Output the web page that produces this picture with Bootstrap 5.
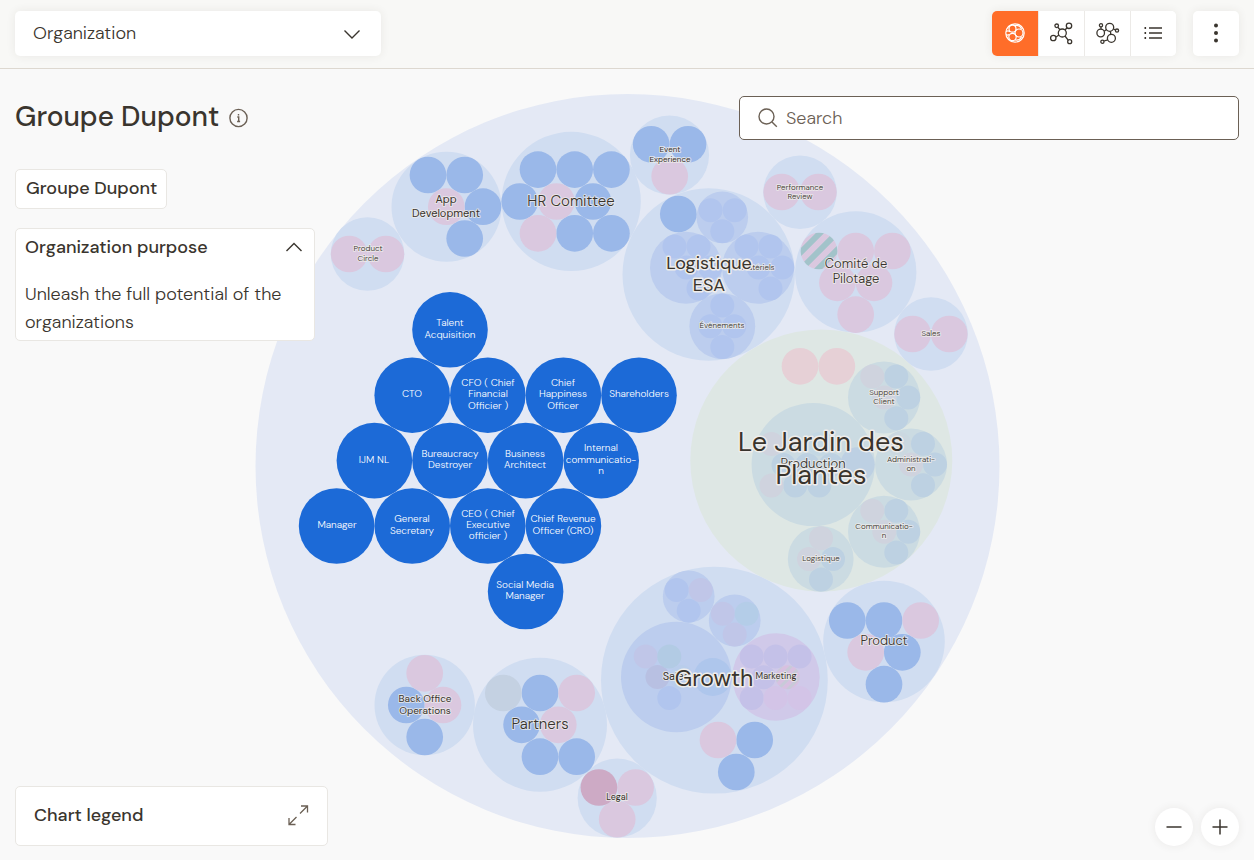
<!DOCTYPE html>
<html lang="en">
<head>
<meta charset="utf-8">
<meta name="viewport" content="width=device-width, initial-scale=1">
<title>Groupe Dupont</title>
<link href="https://cdn.jsdelivr.net/npm/bootstrap@5.3.0/dist/css/bootstrap.min.css" rel="stylesheet">
<style>
:root { --ink:#3a352e; --soft:#6b6055; --line:#e9e7e3; --orange:#ff6d29; }
body { font-family:"DM Sans", Inter, "Open Sans", sans-serif; font-weight:300; font-size:18px; color:var(--ink); background:#f9f9f9; }
svg { display:block; }
.topbar { background:#f8f8f6; border-bottom:1px solid #ddd8d0; padding:11px 15px 12px; }
.raised { background-color:#fff; border-radius:5px; box-shadow:0 0 10px rgba(60,50,40,.08); }
.view-select { width:366px; height:45px; border:0; padding:0 48px 0 18px; font-size:18px; font-weight:300; color:var(--ink);
  background-image:url("data:image/svg+xml,%3Csvg xmlns='http://www.w3.org/2000/svg' viewBox='0 0 16 16'%3E%3Cpath d='M.5 4.5 8 12l7.500-7.500' fill='none' stroke='%233a352e' stroke-width='1.400'/%3E%3C/svg%3E");
  background-position:right 21px center; background-size:16px 16px; }
.tools { gap:17px; }
.tool { width:46px; height:45px; padding:0 0 1px; border:0; border-radius:0; background:#fff; color:var(--ink); display:flex; align-items:center; justify-content:center; }
.tool + .tool { border-left:1px solid #eceae7; }
.tool.raised { border-radius:5px; }
.tool.active, .tool.active:hover { background:var(--orange); color:#fff; }
.stage { min-height:0; }
.chart { position:absolute; inset:0; width:100%; height:100%; }
.overlay { position:relative; pointer-events:none; padding:27px 15px 14px; }
.overlay > * > * { pointer-events:auto; }
.side { width:300px; }
.page-title { font-size:28px; line-height:42px; font-weight:550; margin:0; }
.panel { background:#fff; border:1px solid var(--line); border-radius:5px; color:var(--ink); text-align:left; }
.crumb { font-size:18px; line-height:20px; font-weight:500; padding:8px 9px 10px 10px; margin-top:31px; text-decoration:none; }
.purpose { margin-top:19px; padding:8px 9px 4px; }
.purpose-head { font-size:18px; line-height:20px; font-weight:500; }
.purpose p { font-size:18px; line-height:28px; margin:23px 0 0; }
.search { width:500px; height:44px; border:1px solid var(--soft); border-radius:5px; background:#fff; padding:0 16px 0 18px; color:var(--soft); }
.search input, .search input:focus { border:0; padding:0; background:none; box-shadow:none; font-size:18px; font-weight:300; color:var(--ink); }
.search input::placeholder { color:#6b6055; opacity:1; }
.legend-btn { width:313px; height:60px; padding:0 18px 2px; font-size:18px; font-weight:500; }
.zoom-btn { width:38px; height:38px; padding:0; border:0; border-radius:50%; color:var(--ink); display:flex; align-items:center; justify-content:center; }
.chart text { text-anchor:middle; fill:#39342d; stroke:#efedeb; stroke-opacity:.75; stroke-width:2px; paint-order:stroke; stroke-linejoin:round; }
.t8 { font-size:8px; } .t9 { font-size:9px; } .t10 { font-size:10px; } .t11 { font-size:11px; } .t13 { font-size:13px; } .t15 { font-size:15px; } .t18 { font-size:18px; } .t23 { font-size:23px; } .t27 { font-size:27px; }
.regular, .t18, .t23, .t27 { font-weight:400; }
.chart .roles text { fill:#fff; stroke:none; }
.chart .big text { stroke-width:3px; stroke-opacity:1; }
.root { fill:#e4e9f5; } .c1 { fill:#d0ddf1; } .c2 { fill:#bccdee; } .blue { fill:#9ab8e9; } .pink { fill:#dac8df; } .s-blue { fill:#b1c5ee; }
.solid { fill:#1c6ad7; } .green { fill:#dee7e4; } .g2 { fill:#cbdbe2; } .g-blue { fill:#bdd1e2; } .g-pink { fill:#cfd3de; }
.lilac { fill:#c0c6e8; } .teal { fill:#b4cde8; } .mkt { fill:#d0c9e9; } .m-blue { fill:#c4c1e8; } .m-pink { fill:#d3c4e7; }
</style>
</head>
<body>
<div class="d-flex flex-column min-vh-100">
<header class="topbar d-flex justify-content-between align-items-center">
  <select class="form-select view-select raised" aria-label="View"><option>Organization</option></select>
  <div class="tools d-flex">
    <div class="raised d-flex overflow-hidden" role="group" aria-label="Chart type">
      <button class="btn tool active" type="button" aria-label="Circles"><svg width="20" height="20" viewBox="0 0 20 20" fill="none" stroke="currentColor" stroke-width="1.200"><circle cx="10" cy="10" r="9.200"/><circle cx="7.500" cy="5.700" r="3.500"/><circle cx="14" cy="10" r="4"/><circle cx="7.500" cy="14" r="3.700"/><path d="M1 8.500c1.500-1 3-.6 4 .2M1 11.500c1.200 1 2.400.6 3.300 0M9.500 2.500C12.500 2 15.500 3.500 16.500 6M10 17c3 .5 5.500-.8 6.500-3"/></svg></button>
      <button class="btn tool" type="button" aria-label="Network"><svg width="24" height="24" viewBox="0 0 24 24" fill="none" stroke="currentColor" stroke-width="1.300"><circle cx="12.300" cy="12" r="4"/><circle cx="6.700" cy="4.800" r="1.800"/><circle cx="19" cy="4.800" r="2.700"/><circle cx="3.300" cy="17" r="2.700"/><circle cx="19.700" cy="20.700" r="2"/><path d="m7.800 6.300 2.200 2.500M17.100 6.700 15 9M6 16l3-2M15 15l3.300 4.300"/></svg></button>
      <button class="btn tool" type="button" aria-label="Clusters"><svg width="24" height="24" viewBox="0 0 24 24" fill="none" stroke="currentColor" stroke-width="1.300"><circle cx="5" cy="4.300" r="1.600"/><circle cx="13.700" cy="6.300" r="4"/><circle cx="21" cy="9.600" r="1.600"/><circle cx="4.700" cy="12" r="3.800"/><circle cx="15.400" cy="17.300" r="4"/><circle cx="6.400" cy="20.700" r="1.600"/><path d="M5 6v2.200M17.400 8l2 .9M8.200 10.300l2.300-1.800M14.400 10.300l.4 3M8 20l3.700-1.200"/></svg></button>
      <button class="btn tool" type="button" aria-label="List"><svg width="20" height="20" viewBox="0 0 20 20" fill="none" stroke="currentColor" stroke-width="1.300"><path d="M5 5h13M5 10h13M5 15h13"/><path d="M.5 5h1.600M.5 10h1.600M.5 15h1.600" stroke-width="1.800"/></svg></button>
    </div>
    <button class="btn tool raised" type="button" aria-label="More"><svg width="20" height="20" viewBox="0 0 20 20" fill="currentColor"><circle cx="10" cy="2.500" r="2"/><circle cx="10" cy="10" r="2"/><circle cx="10" cy="17.500" r="2"/></svg></button>
  </div>
</header>

<main class="stage position-relative flex-grow-1 d-flex flex-column">
  <svg class="chart" viewBox="0 69 1254 791" role="img" aria-label="Organization chart">
    <defs>
      <circle id="r" r="18.350"/><circle id="s" r="12"/><circle id="b" r="37.800"/>
      <pattern id="stripes" width="12" height="12" patternUnits="userSpaceOnUse" patternTransform="translate(819 251) rotate(45)"><rect width="12" height="12" fill="#dac8df"/><rect width="3" height="12" fill="#a2c3ca"/><rect x="9" width="3" height="12" fill="#a2c3ca"/></pattern>
      <pattern id="stripes2" width="7" height="7" patternUnits="userSpaceOnUse" patternTransform="rotate(45)"><rect width="7" height="7" fill="#d8c0e0"/><rect width="3" height="7" fill="#c8cad8"/></pattern>
    </defs>
    <circle class="root" cx="627.500" cy="466" r="372"/>
    <g class="c1">
      <circle cx="367.500" cy="254" r="36.800"/><circle cx="446.500" cy="206.800" r="55"/><circle cx="571.200" cy="201.400" r="69.600"/>
      <circle cx="669.500" cy="155" r="39.600"/><circle cx="800" cy="192.300" r="36.800"/><circle cx="708.700" cy="274.500" r="86.200"/>
      <circle cx="855.700" cy="272" r="60.700"/><circle cx="931" cy="334" r="36.800"/><circle cx="714.400" cy="680.200" r="113.400"/>
      <circle cx="884" cy="641.500" r="60.800"/><circle cx="424.700" cy="705" r="50.200"/><circle cx="540" cy="724.700" r="67"/><circle cx="617.200" cy="798" r="39.600"/>
    </g>
    <circle class="green" cx="821.300" cy="460.500" r="131"/>
    <g class="c2">
      <circle cx="722.300" cy="217.300" r="25.800"/><circle cx="686" cy="267.700" r="36"/><circle cx="758" cy="267.700" r="36"/><circle cx="722.300" cy="326.200" r="32.900"/>
      <circle cx="688.700" cy="596.500" r="25.900"/><circle cx="734.700" cy="620.500" r="25.900"/><circle cx="676.300" cy="677" r="55.300"/>
    </g>
    <circle class="mkt" cx="776" cy="677" r="43.700"/>
    <g class="g2">
      <circle cx="813.200" cy="464.500" r="61.600"/><circle cx="884" cy="397.500" r="36"/><circle cx="911" cy="464.500" r="36"/><circle cx="884" cy="531.800" r="36"/><circle cx="820.700" cy="558.900" r="32.900"/>
    </g>
    <g class="blue">
      <use href="#r" x="428" y="175"/><use href="#r" x="464.700" y="175"/><use href="#r" x="483" y="206.700"/><use href="#r" x="464.700" y="238.500"/>
      <use href="#r" x="538" y="169.600"/><use href="#r" x="574.700" y="169.600"/><use href="#r" x="611.400" y="169.600"/><use href="#r" x="519.700" y="201.500"/><use href="#r" x="593" y="201.500"/><use href="#r" x="574.700" y="233.300"/><use href="#r" x="611.400" y="233.300"/>
      <use href="#r" x="651.200" y="144.300"/><use href="#r" x="688" y="144.300"/><use href="#r" x="678.300" y="214"/>
      <use href="#r" x="847.300" y="620.500"/><use href="#r" x="884" y="620.500"/><use href="#r" x="902.300" y="652.300"/><use href="#r" x="884" y="684.200"/>
      <use href="#r" x="754.700" y="740"/><use href="#r" x="736.300" y="772"/>
      <use href="#r" x="406.300" y="705"/><use href="#r" x="424.700" y="737"/>
      <use href="#r" x="540" y="693"/><use href="#r" x="521.600" y="724.800"/><use href="#r" x="540" y="756.700"/><use href="#r" x="576.700" y="756.700"/>
    </g>
    <g class="pink">
      <use href="#r" x="349.200" y="254"/><use href="#r" x="385.900" y="254"/><use href="#r" x="446.300" y="206.700"/><use href="#r" x="556.400" y="201.500"/><use href="#r" x="538" y="233.300"/>
      <use href="#r" x="669.700" y="176.200"/><use href="#r" x="781.700" y="192"/><use href="#r" x="818.400" y="192"/>
      <use href="#r" x="855.700" y="251"/><use href="#r" x="892.400" y="251"/><use href="#r" x="837.400" y="282.800"/><use href="#r" x="874" y="282.800"/><use href="#r" x="855.700" y="314.600"/>
      <use href="#r" x="912.600" y="334"/><use href="#r" x="949.300" y="334"/><use href="#r" x="920.700" y="620.500"/><use href="#r" x="865.700" y="652.300"/><use href="#r" x="718" y="740"/>
      <use href="#r" x="424.700" y="673.300"/><use href="#r" x="443" y="705"/><use href="#r" x="576.700" y="693"/><use href="#r" x="558.300" y="724.800"/>
      <use href="#r" x="635.600" y="787.500"/><use href="#r" x="617.200" y="819.200"/>
    </g>
    <use href="#r" x="598.900" y="787.500" fill="#cdaac5"/><use href="#r" x="503.300" y="693" fill="#c4d1e2"/>
    <circle cx="819" cy="251" r="18.350" fill="url(#stripes)"/>
    <g fill="#e6d0d6"><use href="#r" x="800" y="366.300"/><use href="#r" x="836.800" y="366.300"/></g>
    <g class="s-blue">
      <use href="#s" x="710.500" y="210.300"/><use href="#s" x="734.700" y="210.300"/><use href="#s" x="722.300" y="231.300"/>
      <use href="#s" x="674.500" y="246.500"/><use href="#s" x="698.500" y="246.500"/><use href="#s" x="686.500" y="267.500"/><use href="#s" x="710.300" y="267.500"/><use href="#s" x="698.500" y="288.500"/>
      <use href="#s" x="746.500" y="246.500"/><use href="#s" x="770.500" y="246.500"/><use href="#s" x="758.500" y="267.500"/><use href="#s" x="782.300" y="267.500"/><use href="#s" x="770.500" y="288.500"/>
      <use href="#s" x="722.300" y="305.500"/><use href="#s" x="710.400" y="326.200"/><use href="#s" x="734.300" y="326.200"/><use href="#s" x="722.300" y="347"/>
      <use href="#s" x="676.700" y="590"/><use href="#s" x="688.700" y="610.800"/><use href="#s" x="669.300" y="698"/>
    </g>
    <circle cx="712.700" cy="677" r="19" fill="#aec6ec"/>
    <g class="lilac"><use href="#s" x="700.700" y="590"/><use href="#s" x="722.800" y="613.800"/><use href="#s" x="734.700" y="634.500"/><use href="#s" x="645.700" y="656.500"/><use href="#s" x="657.500" y="677" fill="#b8c0e2"/></g>
    <g class="teal"><use href="#s" x="746.700" y="613.800"/><use href="#s" x="669.300" y="656.500" fill="#b2cbe4"/><use href="#s" x="681.300" y="677" fill="#b9cdeb"/></g>
    <g class="m-blue"><use href="#s" x="751.700" y="656.500"/><use href="#s" x="775.600" y="656.500"/><use href="#s" x="799.600" y="656.500"/><use href="#s" x="763.600" y="677.300"/><use href="#s" x="751.700" y="698"/></g>
    <g class="m-pink"><use href="#s" x="775.600" y="698"/><use href="#s" x="799.600" y="698"/></g>
    <circle cx="787.600" cy="677.300" r="12" fill="url(#stripes2)"/>
    <g class="g-blue">
      <circle cx="857.500" cy="464.500" r="17.200" fill="#bdd0e3"/>
      <use href="#s" x="819" y="444" fill="#c4d8e4"/><use href="#s" x="783.500" y="465"/><use href="#s" x="807.300" y="465"/><use href="#s" x="831" y="465"/><use href="#s" x="795.300" y="485.500"/><use href="#s" x="819.300" y="485.500"/>
      <use href="#s" x="896.300" y="376.500"/><use href="#s" x="908.300" y="397.500"/><use href="#s" x="896.300" y="418.300"/>
      <use href="#s" x="923" y="443.700"/><use href="#s" x="935" y="464.500"/><use href="#s" x="923" y="485.300"/>
      <use href="#s" x="896.300" y="510.800"/><use href="#s" x="908.300" y="531.800"/><use href="#s" x="896.300" y="552.500"/>
      <use href="#s" x="833" y="559"/><use href="#s" x="821" y="579.500"/>
    </g>
    <g class="g-pink">
      <use href="#s" x="771.500" y="444"/><use href="#s" x="771.500" y="485.500"/><use href="#s" x="872.300" y="376.500"/><use href="#s" x="884.300" y="397.500"/>
      <use href="#s" x="899" y="443.700" fill="#cbd8e0"/><use href="#s" x="911" y="464.500"/><use href="#s" x="872.300" y="510.800"/><use href="#s" x="884.300" y="531.800"/><use href="#s" x="821" y="538.200"/><use href="#s" x="809" y="559"/>
    </g>
    <g class="solid">
      <use href="#b" x="450" y="329.800"/><use href="#b" x="412.200" y="395.200"/><use href="#b" x="487.800" y="395.200"/><use href="#b" x="563.400" y="395.200"/><use href="#b" x="639" y="395.200"/>
      <use href="#b" x="374.400" y="460.600"/><use href="#b" x="450" y="460.600"/><use href="#b" x="525.600" y="460.600"/><use href="#b" x="601.200" y="460.600"/>
      <use href="#b" x="336.600" y="526"/><use href="#b" x="412.200" y="526"/><use href="#b" x="487.800" y="526"/><use href="#b" x="563.400" y="526"/><use href="#b" x="525.600" y="591.500"/>
    </g>
    <g class="roles t10">
      <text x="450" y="326">Talent</text><text x="450" y="338">Acquisition</text><text x="412" y="397">CTO</text>
      <text x="488" y="386">CFO ( Chief</text><text x="488" y="397">Financial</text><text x="488" y="409">Officier )</text>
      <text x="563" y="386">Chief</text><text x="563" y="397">Happiness</text><text x="563" y="409">Officer</text><text x="639" y="397">Shareholders</text>
      <text x="374" y="463">IJM NL</text><text x="450" y="457">Bureaucracy</text><text x="450" y="468">Destroyer</text><text x="525" y="457">Business</text><text x="525" y="468">Architect</text>
      <text x="601" y="451">Internal</text><text x="601" y="463">communicatio-</text><text x="601" y="474">n</text>
      <text x="337" y="528">Manager</text><text x="412" y="522">General</text><text x="412" y="534">Secretary</text>
      <text x="488" y="517">CEO ( Chief</text><text x="488" y="528">Executive</text><text x="488" y="539">officier )</text>
      <text x="563" y="522">Chief Revenue</text><text x="563" y="534">Officer (CRO)</text><text x="525" y="588">Social Media</text><text x="525" y="599">Manager</text>
    </g>
    <g class="t8">
      <text x="368" y="251">Product</text><text x="368" y="261">Circle</text><text x="800" y="190">Performance</text><text x="800" y="199">Review</text>
      <text x="758" y="270">Matériels</text><text x="722" y="328">Événements</text><text x="931" y="336">Sales</text>
      <text x="884" y="395">Support</text><text x="884" y="404">Client</text><text x="911" y="462">Administrati-</text><text x="911" y="471">on</text>
      <text x="884" y="529">Communicatio-</text><text x="884" y="538">n</text><text x="821" y="561">Logistique</text>
    </g>
    <g class="t8 regular"><text x="670" y="152">Event</text><text x="670" y="162">Experience</text></g>
    <g class="t9 regular"><text x="617" y="800">Legal</text><text x="776" y="679">Marketing</text></g>
    <g class="t11 regular"><text x="446" y="203">App</text><text x="446" y="217">Development</text><text x="676" y="680">Sales</text></g>
    <g class="t10 regular"><text x="425" y="702">Back Office</text><text x="425" y="714">Operations</text></g>
    <g class="t13"><text x="856" y="268">Comité de</text><text x="856" y="283">Pilotage</text><text x="813" y="468">Production</text><text x="884" y="645">Product</text></g>
    <g class="t15"><text x="571" y="206">HR Comittee</text><text x="540" y="729">Partners</text></g>
    <g class="big">
      <g class="t18"><text x="709" y="269">Logistique</text><text x="709" y="291">ESA</text></g>
      <g class="t23"><text x="714" y="686">Growth</text></g>
      <g class="t27"><text x="821" y="451">Le Jardin des</text><text x="821" y="484">Plantes</text></g>
    </g>
  </svg>

  <div class="overlay flex-grow-1 d-flex flex-column justify-content-between">
    <div class="d-flex justify-content-between align-items-start">
      <section class="side">
        <div class="d-flex align-items-center gap-2">
          <h1 class="page-title text-nowrap">Groupe Dupont</h1>
          <svg width="24" height="24" viewBox="0 0 24 24" fill="none" stroke="#6b6055" stroke-width="1.400" role="img" aria-label="Information"><circle cx="11.500" cy="13" r="8.600"/><path d="M10.300 12h1.400v4.500M10.100 16.500h3M11.500 9v1.500"/></svg>
        </div>
        <a href="#" class="panel crumb d-inline-block">Groupe Dupont</a>
        <div class="panel purpose">
          <div class="purpose-head d-flex justify-content-between align-items-center">Organization purpose
            <button type="button" class="btn p-0 border-0" aria-label="Collapse"><svg width="22" height="20" viewBox="0 0 22 20" fill="none" stroke="#3a352e" stroke-width="1.400"><path d="m3.500 14 7.500-7.500 7.500 7.500"/></svg></button>
          </div>
          <p>Unleash the full potential of the organizations</p>
        </div>
      </section>
      <label class="search d-flex align-items-center gap-2">
        <svg width="20" height="20" viewBox="0 0 20 20" fill="none" stroke="currentColor" stroke-width="1.400" class="flex-shrink-0"><circle cx="8.500" cy="8.500" r="7.500"/><path d="m14 14 4.800 4.800"/></svg>
        <input type="search" class="form-control" placeholder="Search" aria-label="Search">
      </label>
    </div>
    <div class="d-flex justify-content-between align-items-end">
      <button type="button" class="panel legend-btn d-flex align-items-center justify-content-between">Chart legend
        <svg width="22" height="22" viewBox="0 0 22 22" fill="none" stroke="#6b6055" stroke-width="1.300"><path d="M13 9.500 20.500 2M14 2h6.500v6.500M9.500 13 2 20.500M2 14v6.500h6.500"/></svg>
      </button>
      <div class="d-flex gap-2">
        <button type="button" class="btn zoom-btn raised rounded-circle" aria-label="Zoom out"><svg width="16" height="16" viewBox="0 0 16 16" stroke="currentColor" stroke-width="1.500"><path d="M.5 8h15"/></svg></button>
        <button type="button" class="btn zoom-btn raised rounded-circle" aria-label="Zoom in"><svg width="16" height="16" viewBox="0 0 16 16" stroke="currentColor" stroke-width="1.500"><path d="M.5 8h15M8 .5v15"/></svg></button>
      </div>
    </div>
  </div>
</main>
</div>
<script src="https://cdn.jsdelivr.net/npm/bootstrap@5.3.0/dist/js/bootstrap.bundle.min.js"></script>
</body>
</html>
